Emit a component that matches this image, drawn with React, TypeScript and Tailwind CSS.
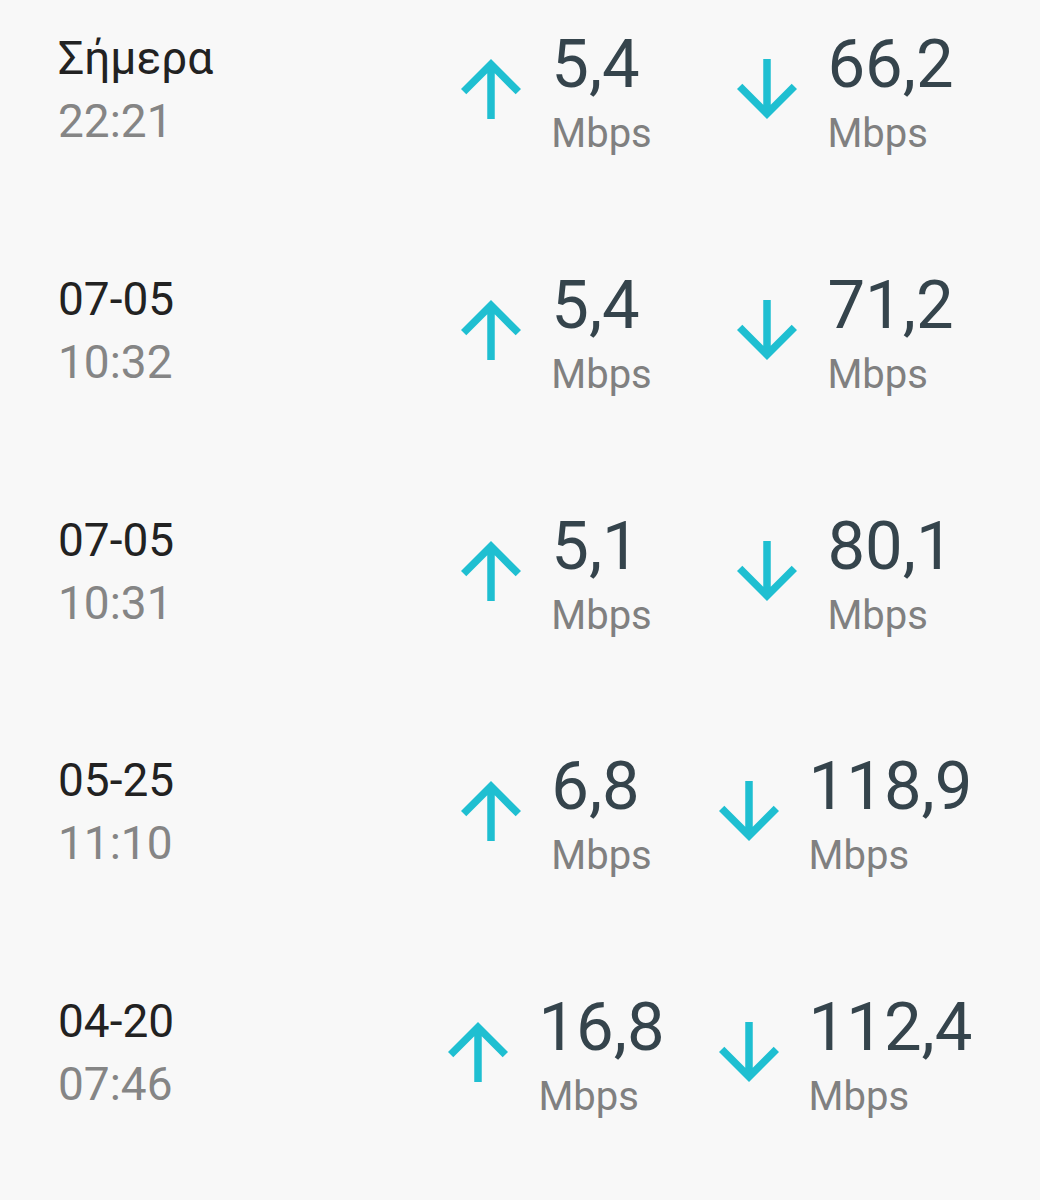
const tests = [
  { date: "Σήμερα", time: "22:21", up: "5,4", down: "66,2" },
  { date: "07-05", time: "10:32", up: "5,4", down: "71,2" },
  { date: "07-05", time: "10:31", up: "5,1", down: "80,1" },
  { date: "05-25", time: "11:10", up: "6,8", down: "118,9" },
  { date: "04-20", time: "07:46", up: "16,8", down: "112,4" },
];

function UpArrow() {
  return (
    <svg viewBox="0 0 24 24" className="w-[90px] h-[90px] shrink-0 fill-[#1fbfd1]">
      <path d="M4 12l1.41 1.41L11 7.83V20h2V7.83l5.58 5.59L20 12l-8-8-8 8z" />
    </svg>
  );
}

function DownArrow() {
  return (
    <svg viewBox="0 0 24 24" className="w-[90px] h-[90px] shrink-0 fill-[#1fbfd1]">
      <path d="M20 12l-1.41-1.41L13 16.17V4h-2v12.17l-5.58-5.59L4 12l8 8 8-8z" />
    </svg>
  );
}

function Speed({ value, dir }: { value: string; dir: "up" | "down" }) {
  return (
    <div className="w-[289px] flex justify-center">
      <div className="flex items-start gap-[15px]">
        <div className="mt-[17px]">{dir === "up" ? <UpArrow /> : <DownArrow />}</div>
        <div className="mt-[4px] flex flex-col">
          <span className="text-[67px] leading-[67px] text-[#35444c]">{value}</span>
          <span className="text-[40px] leading-[71px] text-[#808080]">Mbps</span>
        </div>
      </div>
    </div>
  );
}

export default function App() {
  return (
    <div className="w-[1040px] h-[1200px] overflow-hidden bg-[#f8f8f8] font-['Roboto',sans-serif]">
      {tests.map((t, i) => (
        <div key={i} className="h-[240.75px] flex items-start pl-[58px] pt-[27px]">
          <div className="w-[346.5px] flex flex-col">
            <span className="text-[46px] leading-[63px] text-[#222222]">{t.date}</span>
            <span className="text-[46px] leading-[63px] text-[#858585]">{t.time}</span>
          </div>
          <Speed value={t.up} dir="up" />
          <Speed value={t.down} dir="down" />
        </div>
      ))}
    </div>
  );
}
